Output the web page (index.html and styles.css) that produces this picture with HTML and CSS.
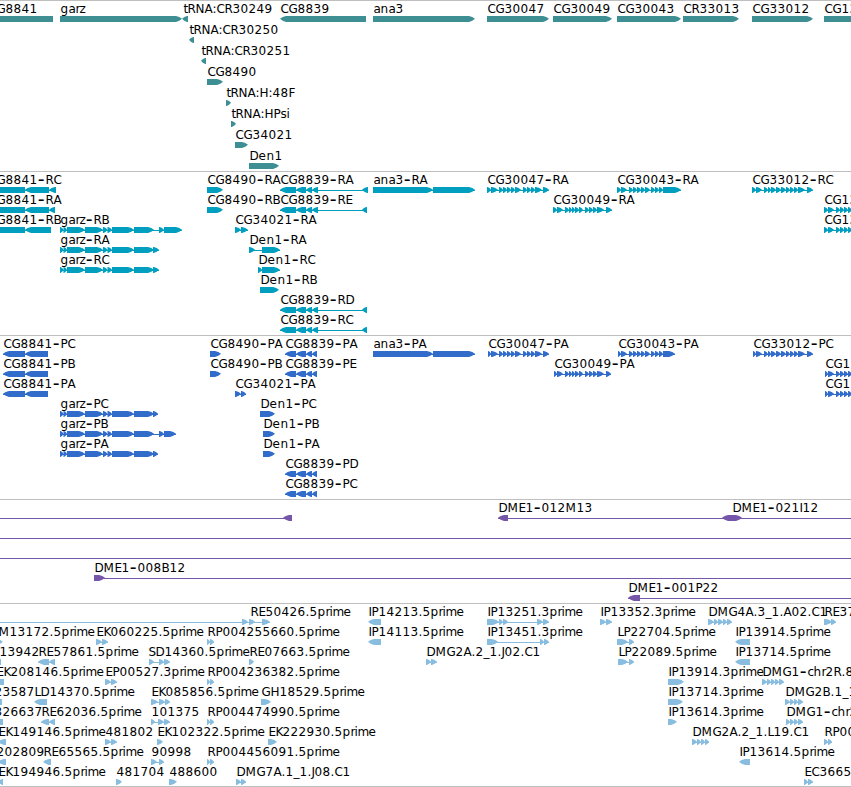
FILE: index.html
```html
<!DOCTYPE html>
<html>
  <head>
    <meta charset="utf-8">
    <title>Genome tracks</title>
    <link rel="stylesheet" href="styles.css">
  </head>
  <body>
    <main class="tracks">
      <svg class="track genes" id="genes"></svg>
      <svg class="track transcripts" id="transcripts"></svg>
      <svg class="track proteins" id="proteins"></svg>
      <svg class="track clones" id="clones"></svg>
      <svg class="track ests" id="ests"></svg>
    </main>
    <script src="tracks.js"></script>
  </body>
</html>
```

FILE: styles.css
```css
html, body {
  margin: 0;
  padding: 0;
  background-color: #fff;
  overflow: hidden;
}
.tracks {
  display: flex;
  flex-direction: column;
  width: 851px;
  border-bottom: 1px solid #bfbfbf;
}
.track {
  display: block;
  box-sizing: border-box;
  width: 100%;
  border-top: 1px solid #bfbfbf;
  overflow: hidden;
}
.track text {
  font-family: 'DejaVu Sans', sans-serif;
  font-size: 12px;
  fill: #000;
}
.track .dash {
  font-size: 19px;
}
.genes {
  height: 171px;
  color: #3d8f94;
}
.transcripts {
  height: 164px;
  color: #009fbf;
}
.proteins {
  height: 164px;
  color: #316ccb;
}
.clones {
  height: 104px;
  color: #7656a8;
}
.ests {
  height: 183px;
  color: #88bddf;
}
.shape {
  fill: currentColor;
}
.link {
  fill: currentColor;
  shape-rendering: crispEdges;
}
```

FILE: tracks.js
```js
(function(window) {
  'use strict';
  const NS = 'http://www.w3.org/2000/svg'
  // glyph advances in whole pixels, anything missing is 8 wide
  const ADVANCE = {
    G: 9, D: 9, N: 9, H: 9, M: 11, m: 11, E: 7, P: 7, K: 7, S: 7, L: 6,
    I: 3, J: 3, i: 3, l: 3, t: 4, r: 4, ':': 4, '.': 4, _: 6, a: 7, z: 6, s: 6, c: 6
  }
  // turn a list of boundaries into touching segments
  const chain = (...p) => p.slice(1).map((x, i) => [p[i], x])

  const garz = [...chain(60, 63.5, 67, 85, 103, 107.5, 112, 134, 154)]
  const cg30047 = [...chain(487, 491, 498), ...chain(499, 503, 507, 511, 515, 521), ...chain(523, 527, 531, 535, 542), [543, 549]]
  const cg30049 = [...chain(553, 557, 563), ...chain(565, 569, 572, 575, 579, 583), ...chain(585, 589, 593, 597, 604), [606, 612]]
  const cg30043 = [...chain(617, 621, 627), ...chain(629, 633, 637, 641, 645, 650), ...chain(651, 655, 659, 663)]
  const cg33012 = [...chain(752, 756, 762), ...chain(764, 768, 771, 776, 781, 786, 790), ...chain(790, 794, 798, 805), [807, 813]]
  const cg13 = [...chain(824, 828, 834), ...chain(836, 840, 844, 848, 852, 856)]
  const cg8839 = chain(280, 296, 306, 312, 318)

  // row, label, label x, strand, segments, [line start, line end]
  const data = {
    genes: [
      [0, 'CG8841', -12, -1, [[-12, 53]]],
      [0, 'garz', 60, 1, [[60, 182]]],
      [0, 'tRNA:CR30249', 183, -1, [[182, 188]]],
      [1, 'tRNA:CR30250', 189, -1, [[189, 194]]],
      [2, 'tRNA:CR30251', 201, -1, [[201, 206]]],
      [3, 'CG8490', 207, 1, [[207, 223]]],
      [4, 'tRNA:H:48F', 226, 1, [[226, 231]]],
      [5, 'tRNA:HPsi', 231, 1, [[231, 236]]],
      [6, 'CG34021', 235, 1, [[235, 248]]],
      [7, 'Den1', 249, 1, [[249, 279]]],
      [0, 'CG8839', 280, -1, [[280, 366]]],
      [0, 'ana3', 373, 1, [[373, 475]]],
      [0, 'CG30047', 487, 1, [[487, 549]]],
      [0, 'CG30049', 553, 1, [[553, 612]]],
      [0, 'CG30043', 617, 1, [[617, 681]]],
      [0, 'CR33013', 683, 1, [[683, 739]]],
      [0, 'CG33012', 752, 1, [[752, 813]]],
      [0, 'CG13', 824, 1, [[824, 870]]]
    ],
    transcripts: [
      [0, 'CG8841-RC', -12, -1, [[-12, 25], [25, 49], [49, 56]]],
      [1, 'CG8841-RA', -12, -1, [[-12, 25], [25, 49], [49, 55]]],
      [2, 'CG8841-RB', -12, -1, [[-12, 25], [25, 51]]],
      [2, 'garz-RB', 60, 1, [...garz, [159, 164], [164, 182]]],
      [3, 'garz-RA', 60, 1, [...garz, [153, 159]]],
      [4, 'garz-RC', 60, 1, [...garz, [153, 159]]],
      [0, 'CG8490-RA', 207, 1, [[207, 223]]],
      [1, 'CG8490-RB', 207, 1, [[207, 223]]],
      [2, 'CG34021-RA', 235, 1, [[235, 241], [241, 248]]],
      [3, 'Den1-RA', 249, 1, [[249, 255], [262, 280]]],
      [4, 'Den1-RC', 258, 1, [[258, 262], [262, 280]]],
      [5, 'Den1-RB', 260, 1, [[260, 279]]],
      [0, 'CG8839-RA', 280, -1, [...cg8839, [362, 368]]],
      [1, 'CG8839-RE', 280, -1, [...cg8839, [362, 367]]],
      [6, 'CG8839-RD', 280, -1, [...cg8839, [362, 367]]],
      [7, 'CG8839-RC', 280, -1, [...cg8839, [362, 367]]],
      [0, 'ana3-RA', 373, 1, [[373, 433], [433, 475]]],
      [0, 'CG30047-RA', 487, 1, cg30047],
      [1, 'CG30049-RA', 553, 1, cg30049],
      [0, 'CG30043-RA', 617, 1, [...cg30043, [663, 681]]],
      [0, 'CG33012-RC', 752, 1, cg33012],
      [1, 'CG13', 824, 1, cg13],
      [2, 'CG13', 824, 1, cg13]
    ],
    proteins: [
      [0, 'CG8841-PC', 3, -1, [[3, 25], [25, 48]]],
      [1, 'CG8841-PB', 3, -1, [[3, 25], [25, 48]]],
      [2, 'CG8841-PA', 3, -1, [[3, 25], [25, 48]]],
      [3, 'garz-PC', 60, 1, [...garz, [153, 158]]],
      [4, 'garz-PB', 60, 1, [...garz, [159, 164], [164, 176]]],
      [5, 'garz-PA', 60, 1, [...garz, [153, 158]]],
      [0, 'CG8490-PA', 210, 1, [[210, 221]]],
      [1, 'CG8490-PB', 210, 1, [[210, 221]]],
      [2, 'CG34021-PA', 235, 1, [[235, 241], [241, 246]]],
      [3, 'Den1-PC', 260, 1, [[260, 275]]],
      [4, 'Den1-PB', 263, 1, [[263, 275]]],
      [5, 'Den1-PA', 263, 1, [[263, 275]]],
      [0, 'CG8839-PA', 285, -1, chain(285, 296, 306, 312, 317)],
      [1, 'CG8839-PE', 285, -1, chain(285, 296, 306, 312, 317)],
      [6, 'CG8839-PD', 285, -1, chain(285, 296, 306, 312, 317)],
      [7, 'CG8839-PC', 285, -1, chain(285, 296, 306, 312, 317)],
      [0, 'ana3-PA', 373, 1, [[373, 433], [433, 475]]],
      [0, 'CG30047-PA', 488, 1, [[488, 491], ...cg30047.slice(1)]],
      [1, 'CG30049-PA', 554, 1, [[554, 557], ...cg30049.slice(1, -1), [606, 611]]],
      [0, 'CG30043-PA', 618, 1, [[618, 621], ...cg30043.slice(1), [663, 675]]],
      [0, 'CG33012-PC', 753, 1, [[753, 756], ...cg33012.slice(1)]],
      [1, 'CG1', 825, 1, [[825, 828], ...cg13.slice(1)]],
      [2, 'CG1', 825, 1, [[825, 828], ...cg13.slice(1)]]
    ],
    clones: [
      [0, '', 0, -1, [[283, 292]], [0, 292]],
      [0, 'DME1-012M13', 498, -1, [[498, 508]], [498, 740]],
      [0, '', 0, 1, [[732, 742]]],
      [0, 'DME1-021I12', 732, -1, [[722, 732]], [722, 851]],
      [1, '', 0, 1, [], [0, 851]],
      [2, '', 0, 1, [], [0, 851]],
      [3, 'DME1-008B12', 94, 1, [[94, 105]], [94, 851]],
      [4, 'DME1-001P22', 628, -1, [[628, 640]], [628, 851]]
    ],
    ests: [
      [0, '', 0, 1, [[242, 248]], [0, 262]],
      [0, 'RE50426.5prime', 250, 1, [[249, 255], [262, 270]]],
      [0, 'IP14213.5prime', 368, -1, [[368, 381]]],
      [0, 'IP13251.3prime', 487, 1, [[487, 499], [499, 503], [503, 508], [537, 543], [543, 549]]],
      [0, 'IP13352.3prime', 600, 1, chain(600, 606, 612)],
      [0, 'DMG4A.3_1.A02.C1', 708, 1, chain(708, 714, 718, 723, 727, 732)],
      [0, 'RE37', 824, 1, [[824, 832], [831, 836]]],
      [1, 'GM13172.5prime', -11, 1, [[-11, 3]]],
      [1, 'EK060225.5prime', 96, 1, chain(96, 102, 108)],
      [1, 'RP004255660.5prime', 207, 1, chain(207, 210, 214)],
      [1, 'IP14113.5prime', 368, -1, [[368, 381]]],
      [1, 'IP13451.3prime', 487, 1, [[487, 498], [540, 544], [544, 549]]],
      [1, 'LP22704.5prime', 617, 1, [[617, 628], [629, 634]]],
      [1, 'IP13914.5prime', 735, -1, [[735, 750]]],
      [2, '13942', -1, -1, [[-11, 1]]],
      [2, 'RE57861.5prime', 38, -1, chain(38, 49, 55)],
      [2, 'SD14360.5prime', 148, 1, [[149, 154], [159, 164], [164, 170]]],
      [2, 'RE07663.5prime', 249, 1, [[249, 254]]],
      [2, 'DMG2A.2_1.J02.C1', 426, 1, chain(426, 431, 437)],
      [2, 'LP22089.5prime', 618, 1, [[618, 628], [629, 634]]],
      [2, 'IP13714.5prime', 735, -1, [[735, 750]]],
      [3, 'EK208146.5prime', -4, -1, [[-11, 4]]],
      [3, 'EP00527.3prime', 105, 1, chain(105, 111, 117)],
      [3, 'RP004236382.5prime', 207, 1, chain(207, 210, 214)],
      [3, 'IP13914.3prime', 668, 1, [[668, 684]]],
      [3, 'DMG1-chr2R.8', 762, 1, chain(762, 767, 771, 775, 779, 784)],
      [4, '23587', -6, -1, [[-11, 2]]],
      [4, 'LD14370.5prime', 34, -1, [[34, 47]]],
      [4, 'EK085856.5prime', 151, 1, [[151, 158], [159, 165], [165, 170]]],
      [4, 'GH18529.5prime', 261, 1, [[261, 271]]],
      [4, 'IP13714.3prime', 668, 1, [[668, 683]]],
      [4, 'DMG2B.1_1', 785, 1, chain(785, 790, 794, 798, 803)],
      [5, '326637', -6, -1, [[-11, 3]]],
      [5, 'RE62036.5prime', 41, -1, chain(41, 49, 55)],
      [5, '101375', 151, 1, [[151, 155], [158, 164], [164, 170]]],
      [5, 'RP004474990.5prime', 207, 1, chain(207, 210, 214)],
      [5, 'IP13614.3prime', 668, 1, [[668, 677]]],
      [5, 'DMG1-chr2', 786, 1, chain(786, 790, 794, 798, 803)],
      [6, 'EK149146.5prime', -2, -1, [[-2, 6]]],
      [6, '481802', 105, 1, chain(105, 111, 117)],
      [6, 'EK102322.5prime', 157, 1, [[157, 163]]],
      [6, 'EK222930.5prime', 268, 1, [[268, 277]]],
      [6, 'DMG2A.2_1.L19.C1', 692, 1, chain(692, 697, 701, 705, 709)],
      [6, 'RP00', 824, 1, chain(824, 828, 832)],
      [7, '202809', -4, -1, [[-2, 6]]],
      [7, 'RE65565.5prime', 43, -1, [[43, 51]]],
      [7, '90998', 151, 1, [[151, 157], [159, 164]]],
      [7, 'RP004456091.5prime', 207, 1, chain(207, 210, 214)],
      [7, 'IP13614.5prime', 739, -1, [[739, 750]]],
      [8, 'EK194946.5prime', -2, -1, [[-2, 3]]],
      [8, '481704', 116, 1, [[116, 122]]],
      [8, '488600', 169, 1, [[169, 177]]],
      [8, 'DMG7A.1_1.J08.C1', 236, 1, chain(236, 241, 246)],
      [8, 'EC3665', 804, 1, chain(804, 808, 813)]
    ]
  }

  const add = (parent, name, attrs) => {
    const node = document.createElementNS(NS, name)
    Object.keys(attrs).forEach(key => node.setAttribute(key, attrs[key]))
    parent.appendChild(node)
    return node
  }
  // exon box with a slightly bulging tip, short exons keep a bit of their box
  const arrow = (x1, x2, y, strand) => {
    const tip = Math.min(6, (x2 - x1) * 0.85) * strand
    const tail = strand > 0 ? x1 : x2
    const head = strand > 0 ? x2 : x1
    const half = head - tip * 0.45
    return `M${tail} ${y}H${head - tip}L${half} ${y + 1.1}L${head} ${y + 2.8}L${half} ${y + 4.8}L${head - tip} ${y + 6}H${tail}Z`
  }
  const drawLabel = (svg, label, x, y) => {
    const xs = []
    const ys = []
    for (const ch of label) {
      xs.push(ch === '-' ? x + 0.7 : x + 0.5)
      ys.push(ch === '-' ? y + 1.5 : y)
      x += ADVANCE[ch] || 8
    }
    const text = add(svg, 'text', { x: xs.join(' '), y: ys.join(' ') })
    label.split(/(-)/).forEach(part => {
      if (part === '-') {
        add(text, 'tspan', { class: 'dash' }).textContent = part
      }
      else {
        text.appendChild(document.createTextNode(part))
      }
    })
  }
  const drawTrack = (id, pitch) => {
    const svg = document.getElementById(id)
    data[id].forEach(([row, label, x, strand, segments, line]) => {
      const y = row * pitch
      if (!line && segments.length > 1) {
        line = [segments[0][0], segments[segments.length - 1][1]]
      }
      if (line) {
        add(svg, 'rect', { class: 'link', x: line[0], y: y + 18, width: line[1] - line[0], height: 1 })
      }
      segments.forEach(([x1, x2]) => add(svg, 'path', { class: 'shape', d: arrow(x1, x2, y + 15, strand) }))
      if (label) {
        drawLabel(svg, label, x, y + 12)
      }
    })
  }
  drawTrack('genes', 21)
  drawTrack('transcripts', 20)
  drawTrack('proteins', 20)
  drawTrack('clones', 20)
  drawTrack('ests', 20)
})(window);
```
